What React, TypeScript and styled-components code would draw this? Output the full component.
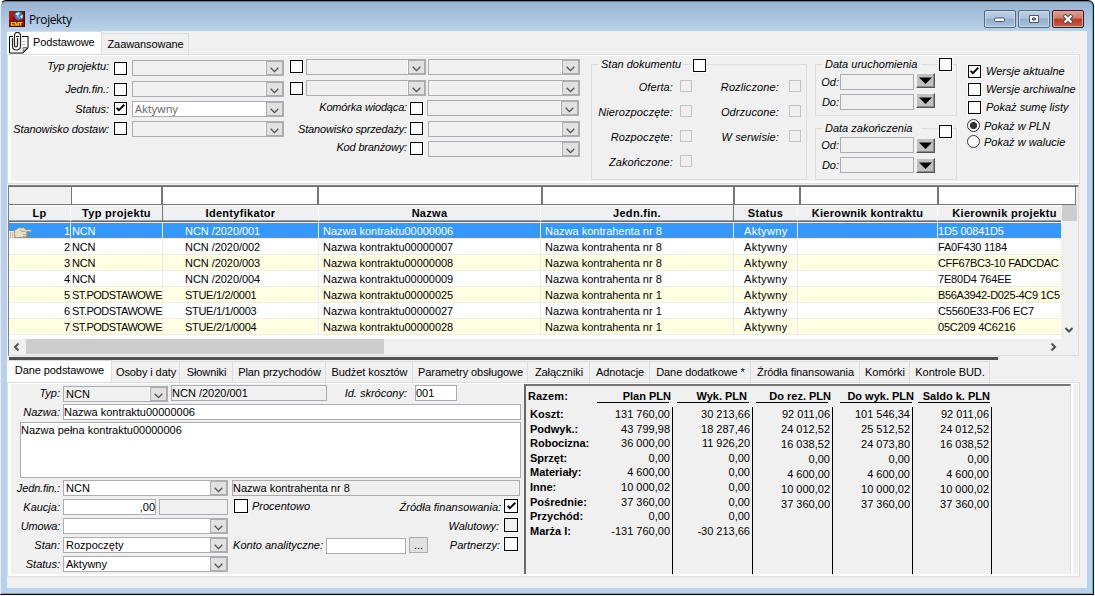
import React from 'react';
import styled, { createGlobalStyle, css } from 'styled-components';

const GlobalStyle = createGlobalStyle`
  * { box-sizing: border-box; }
  body { margin: 0; background: #fff; overflow: hidden; }
`

type Offset = { $ml?: number; $mt?: number }
const offset = css<Offset>`
  margin-left: ${p => p.$ml ?? 0}px;
  margin-top: ${p => p.$mt ?? 0}px;
`

// window frame
const Frame = styled.div`
  display: flex;
  flex-direction: column;
  width: 1094px;
  height: 595px;
  padding: 0 6px 6px;
  border: solid #000;
  border-width: 1px 1px 1px 0;
  border-left: 1px solid #e4ecf5;
  border-radius: 6px 6px 0 0;
  box-shadow: inset -1px -1px 0 #35c5e2, inset 0 1px 0 #6b7c90;
  background: linear-gradient(#99b4d1, #b9d1ea 30px, #b9d1ea);
  font: 11px/14px "Liberation Sans", Arial, sans-serif;
  color: #000;
  white-space: nowrap;
`
const TitleBar = styled.header`
  display: flex;
  height: 30px;
  flex: none;
  padding: 10px 3px 0 2px;
`
const Title = styled.h1`
  flex: 1;
  margin: 0 0 0 4px;
  font: 12px/17px "Open Sans", sans-serif;
  letter-spacing: -0.4px;
`
const WindowButton = styled.button<{ $close?: boolean }>`
  display: flex;
  align-items: center;
  justify-content: center;
  width: 32px;
  height: 18px;
  margin: -1px 0 0 2px;
  padding: 0;
  border: 1px solid ${p => (p.$close ? '#43141a' : '#51677f')};
  border-radius: 2px;
  box-shadow: inset 0 0 0 1px ${p => (p.$close ? '#dda69f' : '#c8d9eb')};
  background: ${p => p.$close
    ? 'linear-gradient(#e0a096, #d4796b 45%, #b93a25 50%, #c75c46)'
    : 'linear-gradient(#bdd0e5, #adc3dc 45%, #92adc9 50%, #a9c3dd)'};
`
const Client = styled.main`
  display: flex;
  flex-direction: column;
  flex: 1;
  background: #f0f0f0;
`

// tabs
const TabStrip = styled.nav<{ $lower?: boolean }>`
  display: flex;
  align-items: flex-end;
  flex: none;
  height: ${p => (p.$lower ? 22 : 23)}px;
  letter-spacing: -0.08px;
`
const Tab = styled.div<{ $w: number; $active?: boolean }>`
  display: flex;
  align-items: flex-start;
  justify-content: center;
  flex: none;
  width: ${p => p.$w}px;
  height: ${p => (p.$active ? '100%' : '21px')};
  padding: ${p => (p.$active ? '2px 0 0 1px' : '3px 0 0 1px')};
  border: solid #dcdcdc;
  border-width: 1px 1px 0 0;
  background: ${p => (p.$active ? '#fff' : '#f0f0f0')};
`
const ClipTab = styled(Tab)`
  justify-content: flex-start;
  padding: 0 0 0 2px;
`
const TabText = styled.span`
  margin: 3px 0 0 4px;
`
const TabPage = styled.section<{ $h: number }>`
  display: flex;
  flex: none;
  width: 1073px;
  height: ${p => p.$h}px;
  border: 1px solid #dcdcdc;
  box-shadow: inset 3px 0 0 #fff, inset 0 1px 0 #fff, inset -1px -2px 0 #fff;
  padding: 1px 1px 2px 3px;
`

// form parts
const Block = styled.div<{ $w: number } & Offset>`
  flex: none;
  width: ${p => p.$w}px;
  ${offset}
`
const Line = styled.div<{ $h: number }>`
  display: flex;
  align-items: flex-start;
  height: ${p => p.$h}px;
`
const Label = styled.label<{ $w?: number; $left?: boolean; $tight?: number } & Offset>`
  flex: none;
  width: ${p => (p.$w ? `${p.$w}px` : 'auto')};
  font-style: italic;
  letter-spacing: ${p => -(p.$tight ?? 0)}px;
  text-align: ${p => (p.$left ? 'left' : 'right')};
  ${offset}
`
const Box = styled.span<{ $size?: number; $dim?: boolean; $gray?: boolean } & Offset>`
  display: flex;
  align-items: center;
  justify-content: center;
  flex: none;
  width: ${p => p.$size ?? 13}px;
  height: ${p => p.$size ?? 13}px;
  border: 1px solid ${p => (p.$dim ? '#c3c3c3' : '#000')};
  background: ${p => (p.$dim || p.$gray ? '#f0f0f0' : '#fff')};
  box-shadow: ${p => (p.$dim ? 'none' : '0 0 0 1px #fafafa')};
  ${offset}
`
const RadioDot = styled.span<{ $on?: boolean } & Offset>`
  flex: none;
  width: 13px;
  height: 13px;
  border: 1px solid #333;
  border-radius: 50%;
  background: ${p => (p.$on ? 'radial-gradient(circle, #333 3.2px, #fff 4px)' : '#fff')};
  ${offset}
`
const Input = styled.div<{ $w: number; $h?: number; $white?: boolean; $right?: boolean } & Offset>`
  flex: none;
  width: ${p => p.$w}px;
  height: ${p => p.$h ?? 16}px;
  border: 1px solid #abadb3;
  background: ${p => (p.$white ? '#fff' : '#f0f0f0')};
  text-align: ${p => (p.$right ? 'right' : 'left')};
  ${offset}
`
const ComboRoot = styled.div<{ $w: number; $white?: boolean; $faded?: boolean } & Offset>`
  display: flex;
  flex: none;
  width: ${p => p.$w}px;
  height: 16px;
  border: 1px solid #abadb3;
  background: ${p => (p.$white ? '#fff' : '#f0f0f0')};
  ${p => p.$faded && 'color: #6d6d6d; font-family: "Noto Sans", sans-serif; letter-spacing: -0.1px;'}
  ${offset}
`
const ComboText = styled.span`
  flex: 1;
  padding-left: 2px;
`
const ComboButton = styled.span`
  display: flex;
  align-items: flex-end;
  justify-content: center;
  width: 17px;
  height: 14px;
  padding-bottom: 1px;
  border: 1px solid #adadad;
  box-shadow: -1px 0 0 #fff;
  background: #e1e1e1;
`
const DropButton = styled.button<Offset>`
  display: flex;
  align-items: center;
  justify-content: center;
  flex: none;
  width: 19px;
  height: 15px;
  padding: 0;
  border: 1px solid;
  border-color: #f4f4f4 #555 #555 #f4f4f4;
  box-shadow: inset -1px -1px 0 #8a8a8a;
  background: #c0c0c0;
  ${offset}
`
const DotsButton = styled.button<Offset>`
  width: 19px;
  height: 16px;
  padding: 0;
  border: 1px solid #adadad;
  background: #e1e1e1;
  font: 11px/12px "Liberation Sans", sans-serif;
  ${offset}
`
const Group = styled.div<{ $h: number } & Offset>`
  height: ${p => p.$h}px;
  border: 1px solid #dcdcdc;
  ${offset}
`
// the caption row straddles the top border of its group
const Caption = styled.div`
  display: flex;
  height: 18px;
  margin-top: -8px;
  padding-left: 7px;
`
const CaptionText = styled.span<{ $w: number }>`
  width: ${p => p.$w}px;
  height: 14px;
  padding-left: 2px;
  background: #f0f0f0;
  font-style: italic;
`

// grid
const Grid = styled.section`
  flex: none;
  width: 1071px;
  height: 171px;
  margin-top: 1px;
  margin-left: 1px;
  border: solid #808080;
  border-width: 1px 0 0 1px;
  border-right: 1px solid #dcdcdc;
  border-bottom: 1px solid #dcdcdc;
  box-shadow: inset 0 1px 0 #777;
`
const FilterRow = styled.div`
  display: flex;
  height: 19px;
  border-top: 1px solid #6f6f6f;
`
const FilterCell = styled.div<{ $w: number }>`
  width: ${p => p.$w}px;
  border: solid #777;
  border-width: 0 1px 1px;
  background: #fff;
  &:first-child { border-left: 0; border-right: 0; background: #f0f0f0; }
`
const GridBody = styled.div`
  display: flex;
  height: 134px;
`
const Table = styled.div`
  width: 1052px;
  overflow: hidden;
  background: #fff;
`
const COLUMNS = '62px 92px 156px 222px 193px 64px 140px 138px'
const HeadRow = styled.div`
  display: grid;
  grid-template-columns: ${COLUMNS};
  height: 18px;
  background: #f0f0f0;
`
const HeadCell = styled.div<{ $dark?: boolean }>`
  height: 17px;
  padding-top: 1px;
  border-right: 1px solid ${p => (p.$dark ? '#777' : '#fff')};
  border-bottom: 1px solid #696969;
  box-shadow: inset 0 -1px 0 #a0a0a0, inset 0 1px 0 #fff;
  font-weight: bold;
  letter-spacing: 0.3px;
  text-align: center;
  &:last-child { padding-right: 4px; }
`
const Row = styled.div<{ $selected?: boolean; $tint?: boolean }>`
  display: grid;
  grid-template-columns: ${COLUMNS};
  height: 16px;
  background: ${p => (p.$selected ? '#3399ff' : p.$tint ? '#ffffe1' : '#fff')};
  color: ${p => (p.$selected ? '#fff' : '#000')};
`
const Cell = styled.div<{ $pad?: number; $right?: boolean; $tight?: number }>`
  display: flex;
  justify-content: ${p => (p.$right ? 'flex-end' : 'flex-start')};
  padding: 1px 0 0 ${p => p.$pad ?? 0}px;
  border: solid #ececec;
  border-width: 0 1px 1px 0;
  letter-spacing: ${p => -(p.$tight ?? 0)}px;
`
const HandSlot = styled.span`
  flex: 1;
  padding-top: 3px;
  line-height: 0;
`
const VScroll = styled.div`
  display: flex;
  flex-direction: column;
  justify-content: space-between;
  align-items: center;
  width: 16px;
  padding-bottom: 5px;
  background: #f0f0f0;
`
const VThumb = styled.div`
  width: 15px;
  height: 16px;
  background: #cdcdcd;
`
const HScroll = styled.div`
  display: flex;
  align-items: center;
  height: 15px;
  padding: 0 21px 0 4px;
`
const HThumb = styled.div`
  width: 358px;
  height: 15px;
  margin: 0 auto 0 5px;
  background: #cdcdcd;
`
const Splitter = styled.div`
  flex: none;
  width: 989px;
  height: 3px;
  margin: 1px 0 0 2px;
  background: #505050;
`

// totals
const Totals = styled.div`
  display: flex;
  width: 547px;
  height: 190px;
  margin-left: 2px;
  border: solid #696969;
  border-width: 2px 0 0 2px;
  border-top-color: #757575;
  border-right: 1px solid #dcdcdc;
  box-shadow: 2px 0 0 #fff;
`
const TotalsNames = styled.div`
  width: 66px;
  padding: 3px 0 0 2px;
  font-weight: bold;
`
const TotalsList = styled.div<{ $pitch: number }>`
  padding: 0 2px;
  line-height: ${p => p.$pitch}px;
`
const TotalsTitle = styled.div`
  height: 18px;
  letter-spacing: 0.15px;
`
const TotalsColumn = styled.div<{ $w: number }>`
  width: ${p => p.$w}px;
  padding-top: 3px;
`
const TotalsHead = styled.div<{ $ml: number; $over: number; $w: number }>`
  display: flex;
  justify-content: flex-end;
  width: ${p => p.$w}px;
  height: 14px;
  margin-left: ${p => p.$ml}px;
  padding-right: ${p => Math.max(0, -p.$over)}px;
  border-bottom: 1px solid #000;
  font-weight: bold;
`
const HeadText = styled.span<{ $over: number }>`
  margin-right: ${p => -Math.max(0, p.$over)}px;
`
const TotalsValues = styled.div<{ $pitch: number }>`
  height: 167px;
  margin-top: 4px;
  padding-right: 2px;
  border-right: 1px solid #000;
  line-height: ${p => p.$pitch}px;
  text-align: right;
`

const Chevron = () => (
  <svg width="9" height="6" viewBox="0 0 9 6"><path d="M.7.8 4.5 4.6 8.3.8" fill="none" stroke="#505050" strokeWidth="1.3" /></svg>
)
const Check = () => (
  <svg width="9" height="9" viewBox="0 0 9 9"><path d="M.6 3.800 2.800 6.200 8.300.8" fill="none" stroke="#000" strokeWidth="1.900" /></svg>
)
const Arrow = ({ d }: { d: string }) => (
  <svg width="8" height="8" viewBox="0 0 8 8"><path d={d} fill="none" stroke="#505050" strokeWidth="2" /></svg>
)

const AppIcon = () => (
  <svg width="16" height="16" viewBox="0 0 16 16">
    <rect width="16" height="16" fill="#8c0a08" />
    <path d="M0 0h7L3 9H0z" fill="#b81612" />
    <circle cx="9.800" cy="4.800" r="4.400" fill="#3c78b4" />
    <path d="M6 3q3-3 5-1l-2 3zM11 5l3-1-1 4z" fill="#d7eefa" />
    <path d="M7 6l3-2 1 4z" fill="#7ea9d4" />
    <path d="M15.500 0v16M0 15.500h16" stroke="#4b0505" />
    <text x="1.500" y="14.500" fontFamily="Liberation Sans" fontSize="6" fontWeight="bold" fill="#ffe600" textLength="12">EMT</text>
  </svg>
)

const ClipIcon = () => (
  <svg width="20" height="22" viewBox="0 0 20 22" fill="none">
    <path d="M.5 4.500h18.500v11.500l-5 5H.5z" fill="#fff" stroke="#000" />
    <path d="M8 17.500h4M10 9.500h6M12 12.500h4" stroke="#b0b0b0" />
    <path d="M18.500 15.500h-4.500V20z" fill="#c0c0c0" stroke="#777" />
    <path d="M3.500 6v8q0 4 4 4t4-4V4q0-3.500-3-3.500T5.500 4v9q0 2 1.500 2t1.500-2V6" stroke="#fff" strokeWidth="3" />
    <path d="M3.500 6v8q0 4 4 4t4-4V4q0-3.500-3-3.500T5.500 4v9q0 2 1.500 2t1.500-2V6" stroke="#222" strokeWidth="1.200" />
  </svg>
)

const HandIcon = () => (
  <svg width="24" height="11" viewBox="0 0 24 11">
    <path d="M0 4h5v7H0z" fill="#f3f1ea" />
    <path d="M1.500 5v6M3.500 5v6" stroke="#b9b6ad" />
    <path d="M5.500 3.500 10 .7h5l1.500 2h5.500q1 1 0 2h-5l1 2-1 3.800H5.500z" fill="#e4e0c4" stroke="#c08a4c" strokeWidth=".9" />
    <path d="M11 3l2 1.500h3M17 7.500h-3M16 9.500h-2" stroke="#c08a4c" strokeWidth=".8" fill="none" />
  </svg>
)

const Combo = ({ w, text, white, faded, ml, mt }: { w: number; text?: string; white?: boolean; faded?: boolean; ml?: number; mt?: number }) => (
  <ComboRoot $w={w} $white={white} $faded={faded} $ml={ml} $mt={mt}>
    <ComboText>{text}</ComboText>
    <ComboButton><Chevron /></ComboButton>
  </ComboRoot>
)

// label top, checkbox top and combo top differ slightly from line to line
const leftFilters = [
  { h: 21, label: 'Typ projektu:', l: 0, b: 3, c: 1 },
  { h: 20, label: 'Jedn.fin.:', l: 2, b: 3, c: 1 },
  { h: 20, label: 'Status:', l: 2, b: 2, c: 1, on: true },
  { h: 20, label: 'Stanowisko dostaw:', l: 2, b: 2, c: 1 },
]
const midFilters = [
  { h: 21, label: 'Komórka wiodąca:', l: 0, b: 2, c: 0, ml: 4 },
  { h: 20, label: 'Stanowisko sprzedaży:', l: 1, b: 1, c: 0, ml: 5 },
  { h: 20, label: 'Kod branżowy:', l: -1, b: 1, c: 0, ml: 5 },
]
const states = [
  ['Oferta:', 'Rozliczone:'],
  ['Nierozpoczęte:', 'Odrzucone:'],
  ['Rozpoczęte:', 'W serwisie:'],
  ['Zakończone:'],
]

const DateGroup = ({ title, mt, first }: { title: string; mt: number; first?: boolean }) => (
  <Group $h={52} $mt={mt}>
    <Caption>
      <CaptionText $w={98}>{title}</CaptionText>
      <Box $ml={18} $mt={first ? 1 : 4} />
    </Caption>
    {['Od:', 'Do:'].map(name => (
      <Line $h={20} key={name}>
        <Label $w={23} $mt={first ? 0 : -1}>{name}</Label>
        <Input $w={74} $ml={1} $mt={first ? -1 : -2} />
        <DropButton $ml={2} $mt={first ? -2 : -1}>
          <svg width="13" height="8" viewBox="0 0 13 8"><path d="M0 .5h13L6.500 7z" fill="#000" /></svg>
        </DropButton>
      </Line>
    ))}
  </Group>
)

const Filters = () => (
  <TabPage $h={130}>
    <Block $w={279} $mt={3}>
      {leftFilters.map(f => (
        <Line $h={f.h} key={f.label}>
          <Label $w={98} $mt={f.l} $tight={0.08}>{f.label}</Label>
          <Box $ml={5} $mt={f.b}>{f.on && <Check />}</Box>
          <Combo w={152} ml={5} mt={f.c} text={f.on ? 'Aktywny' : ''} white={f.on} faded={f.on} />
        </Line>
      ))}
    </Block>
    <Block $w={301} $mt={3}>
      <Line $h={21}><Box $mt={1} /><Combo w={120} ml={3} /><Combo w={152} ml={2} /></Line>
      <Line $h={20}><Box $mt={2} /><Combo w={120} ml={3} /><Combo w={152} ml={2} /></Line>
      {midFilters.map(f => (
        <Line $h={f.h} key={f.label}>
          <Label $w={117} $mt={f.l} $tight={0.17}>{f.label}</Label>
          <Box $ml={3} $mt={f.b} />
          <Combo w={152} ml={f.ml} mt={f.c} />
        </Line>
      ))}
    </Block>
    <Block $w={216} $mt={8}>
      <Group $h={116}>
        <Caption>
          <CaptionText $w={84}>Stan dokumentu</CaptionText>
          <Box $ml={10} $mt={2} />
        </Caption>
        <Block $w={214} $mt={5}>
          {states.map(([a, b]) => (
            <Line $h={25} key={a}>
              <Label $w={81} $tight={-0.1}>{a}</Label><Box $size={12} $dim $ml={7} />
              {b && <><Label $w={87} $tight={-0.12}>{b}</Label><Box $size={12} $dim $ml={10} /></>}
            </Line>
          ))}
        </Block>
      </Group>
    </Block>
    <Block $w={142} $ml={8} $mt={8}>
      <DateGroup title="Data uruchomienia" mt={0} first />
      <DateGroup title="Data zakończenia" mt={12} />
    </Block>
    <Block $w={110} $ml={11} $mt={8}>
      <Line $h={18}><Box $mt={1}><Check /></Box><Label $left $ml={5}>Wersje aktualne</Label></Line>
      <Line $h={18}><Box $mt={1} /><Label $left $ml={5}>Wersje archiwalne</Label></Line>
      <Line $h={18}><Box $mt={1} /><Label $left $ml={5}>Pokaż sumę listy</Label></Line>
      <Line $h={16}><RadioDot $on $ml={-1} $mt={1} /><Label $left $ml={4} $mt={1}>Pokaż w PLN</Label></Line>
      <Line $h={16}><RadioDot $ml={-1} $mt={1} /><Label $left $ml={4} $mt={1}>Pokaż w walucie</Label></Line>
    </Block>
  </TabPage>
)

const heads = ['Lp', 'Typ projektu', 'Identyfikator', 'Nazwa', 'Jedn.fin.', 'Status', 'Kierownik kontraktu', 'Kierownik projektu']
const rows = [
  ['NCN', 'NCN /2020/001', '06', '8', '1D5 00841D5'],
  ['NCN', 'NCN /2020/002', '07', '8', 'FA0F430 1184'],
  ['NCN', 'NCN /2020/003', '08', '8', 'CFF67BC3-10 FADCDAC'],
  ['NCN', 'NCN /2020/004', '09', '8', '7E80D4 764EE'],
  ['ST.PODSTAWOWE', 'STUE/1/2/0001', '25', '1', 'B56A3942-D025-4C9 1C5'],
  ['ST.PODSTAWOWE', 'STUE/1/1/0003', '27', '1', 'C5560E33-F06 EC7'],
  ['ST.PODSTAWOWE', 'STUE/2/1/0004', '28', '1', '05C209 4C6216'],
]

const ProjectGrid = () => (
  <Grid>
    <FilterRow>
      {[62, 91, 156, 224, 192, 66, 138, 138].map((w, i) => <FilterCell $w={w} key={i} />)}
    </FilterRow>
    <GridBody>
      <Table>
        <HeadRow>
          {heads.map((h, i) => <HeadCell $dark={i === 1 || i === 4} key={h}>{h}</HeadCell>)}
        </HeadRow>
        {rows.map(([type, id, no, client, manager], i) => (
          <Row $selected={i === 0} $tint={i > 0 && i % 2 === 0} key={id}>
            <Cell $right>{i === 0 && <HandSlot><HandIcon /></HandSlot>}{i + 1}</Cell>
            <Cell $pad={1} $tight={type === 'NCN' ? 0.2 : 0.5}>{type}</Cell>
            <Cell $pad={22} $tight={i > 3 ? 0.3 : 0.05}>{id}</Cell>
            <Cell $pad={4} $tight={0.03}>Nazwa kontraktu000000{no}</Cell>
            <Cell $pad={4}>Nazwa kontrahenta nr {client}</Cell>
            <Cell $pad={10} $tight={-0.4}>Aktywny</Cell>
            <Cell />
            <Cell $tight={i === 2 || i === 4 ? 0.32 : 0.2}>{manager}</Cell>
          </Row>
        ))}
      </Table>
      <VScroll><VThumb /><Arrow d="M.5 2 4 5.500 7.500 2" /></VScroll>
    </GridBody>
    <HScroll>
      <Arrow d="M5.500 .5 2 4 5.500 7.500" />
      <HThumb />
      <Arrow d="M2.500 .5 6 4 2.500 7.500" />
    </HScroll>
  </Grid>
)

const lowerTabs: [string, number][] = [
  ['Osoby i daty', 68], ['Słowniki', 53], ['Plan przychodów', 93], ['Budżet kosztów', 87],
  ['Parametry obsługowe', 115], ['Załączniki', 62], ['Adnotacje', 60], ['Dane dodatkowe *', 101],
  ['Źródła finansowania', 109], ['Komórki', 50], ['Kontrole BUD.', 80],
]

const MainForm = () => (
  <Block $w={511} $mt={1}>
    <Line $h={19}>
      <Label $w={49} $mt={1}>Typ:</Label>
      <Combo w={105} ml={3} mt={1} text="NCN" />
      <Input $w={156} $ml={3}>NCN /2020/001</Input>
      <Label $w={80} $mt={1}>Id. skrócony:</Label>
      <Input $w={42} $ml={8} $white>001</Input>
    </Line>
    <Line $h={18}><Label $w={49} $mt={1}>Nazwa:</Label><Input $w={458} $ml={3} $white>Nazwa kontraktu00000006</Input></Line>
    <Line $h={58}><Input $w={501} $h={56} $ml={9} $white>Nazwa pełna kontraktu00000006</Input></Line>
    <Line $h={19}>
      <Label $w={49} $mt={1} $tight={0.15}>Jedn.fin.:</Label>
      <Combo w={165} ml={3} text="NCN" white />
      <Input $w={288} $ml={4}>Nazwa kontrahenta nr 8</Input>
    </Line>
    <Line $h={19}>
      <Label $w={49} $mt={1}>Kaucja:</Label>
      <Input $w={93} $ml={3} $white $right>,00</Input>
      <Input $w={69} $ml={3} />
      <Box $size={14} $ml={6} />
      <Label $left $ml={4}>Procentowo</Label>
      <Label $w={191} $mt={1}>Źródła finansowania:</Label>
      <Box $size={14} $ml={3}><Check /></Box>
    </Line>
    <Line $h={19}>
      <Label $w={49} $mt={1} $tight={0.2}>Umowa:</Label>
      <Combo w={165} ml={3} white />
      <Label $w={271} $mt={1}>Walutowy:</Label>
      <Box $size={14} $gray $ml={5} />
    </Line>
    <Line $h={19}>
      <Label $w={49} $mt={1}>Stan:</Label>
      <Combo w={165} ml={3} text="Rozpoczęty" white />
      <Label $w={95} $mt={1}>Konto analityczne:</Label>
      <Input $w={80} $ml={3} $mt={1} $white />
      <DotsButton $ml={3}>...</DotsButton>
      <Label $w={72} $mt={1}>Partnerzy:</Label>
      <Box $size={14} $ml={4} />
    </Line>
    <Line $h={19}><Label $w={49} $mt={1}>Status:</Label><Combo w={165} ml={3} text="Aktywny" white /></Line>
  </Block>
)

const rest = ['24 012,52', '16 038,52', '0,00', '4 600,00', '10 000,02', '37 360,00']
const totals = [
  { head: 'Plan PLN', w: 81, ml: 5, over: 2, values: ['131 760,00', '43 799,98', '36 000,00', '0,00', '4 600,00', '10 000,02', '37 360,00', '0,00', '-131 760,00'] },
  { head: 'Wyk. PLN', w: 80, ml: 4, over: -2, values: ['30 213,66', '18 287,46', '11 926,20', '0,00', '0,00', '0,00', '0,00', '0,00', '-30 213,66'] },
  { head: 'Do rez. PLN', w: 80, ml: 3, over: 3, values: ['92 011,06', ...rest] },
  { head: 'Do wyk. PLN', w: 80, ml: 7, over: 2, values: ['101 546,34', '25 512,52', '24 073,80', ...rest.slice(2)] },
  { head: 'Saldo k. PLN', w: 79, ml: 5, over: 0, values: ['92 011,06', ...rest] },
]

const TotalsPanel = () => (
  <Totals>
    <TotalsNames>
      <TotalsTitle>Razem:</TotalsTitle>
      <TotalsList $pitch={14.6}>
        {['Koszt:', 'Podwyk.:', 'Robocizna:', 'Sprzęt:', 'Materiały:', 'Inne:', 'Pośrednie:', 'Przychód:', 'Marża I:'].map(n => <div key={n}>{n}</div>)}
      </TotalsList>
    </TotalsNames>
    {totals.map(t => (
      <TotalsColumn $w={t.w} key={t.head}>
        <TotalsHead $ml={t.ml} $over={t.over} $w={72}><HeadText $over={t.over}>{t.head}</HeadText></TotalsHead>
        <TotalsValues $pitch={t.values.length > 7 ? 14.6 : 15}>
          {t.values.map((v, i) => <div key={i}>{v}</div>)}
        </TotalsValues>
      </TotalsColumn>
    ))}
  </Totals>
)

const App = () => (
  <>
    <GlobalStyle />
    <Frame>
      <TitleBar>
        <AppIcon />
        <Title>Projekty</Title>
        <WindowButton>
          <svg width="12" height="8"><rect x=".5" y="3" width="10" height="3.500" rx="1" fill="#fff" stroke="#4a5668" /></svg>
        </WindowButton>
        <WindowButton>
          <svg width="12" height="10"><path d="M1.500 1.500h9v7h-9z" fill="#fff" stroke="#4a5668" /><path d="M4.500 4h3v2h-3z" fill="#7890ac" stroke="#4a5668" /></svg>
        </WindowButton>
        <WindowButton $close>
          <svg width="12" height="10"><path d="m2 1 8 8m0-8-8 8" stroke="#54454b" strokeWidth="4" /><path d="m2.500 1.500 7 7m0-7-7 7" stroke="#fff" strokeWidth="2.200" /></svg>
        </WindowButton>
      </TitleBar>
      <Client>
        <TabStrip>
          <ClipTab $w={95} $active><ClipIcon /><TabText>Podstawowe</TabText></ClipTab>
          <Tab $w={87}>Zaawansowane</Tab>
        </TabStrip>
        <Filters />
        <ProjectGrid />
        <Splitter />
        <TabStrip $lower>
          <Tab $w={105} $active>Dane podstawowe</Tab>
          {lowerTabs.map(([name, w]) => <Tab $w={w} key={name}>{name}</Tab>)}
        </TabStrip>
        <TabPage $h={195}>
          <MainForm />
          <TotalsPanel />
        </TabPage>
      </Client>
    </Frame>
  </>
)

export default App;
